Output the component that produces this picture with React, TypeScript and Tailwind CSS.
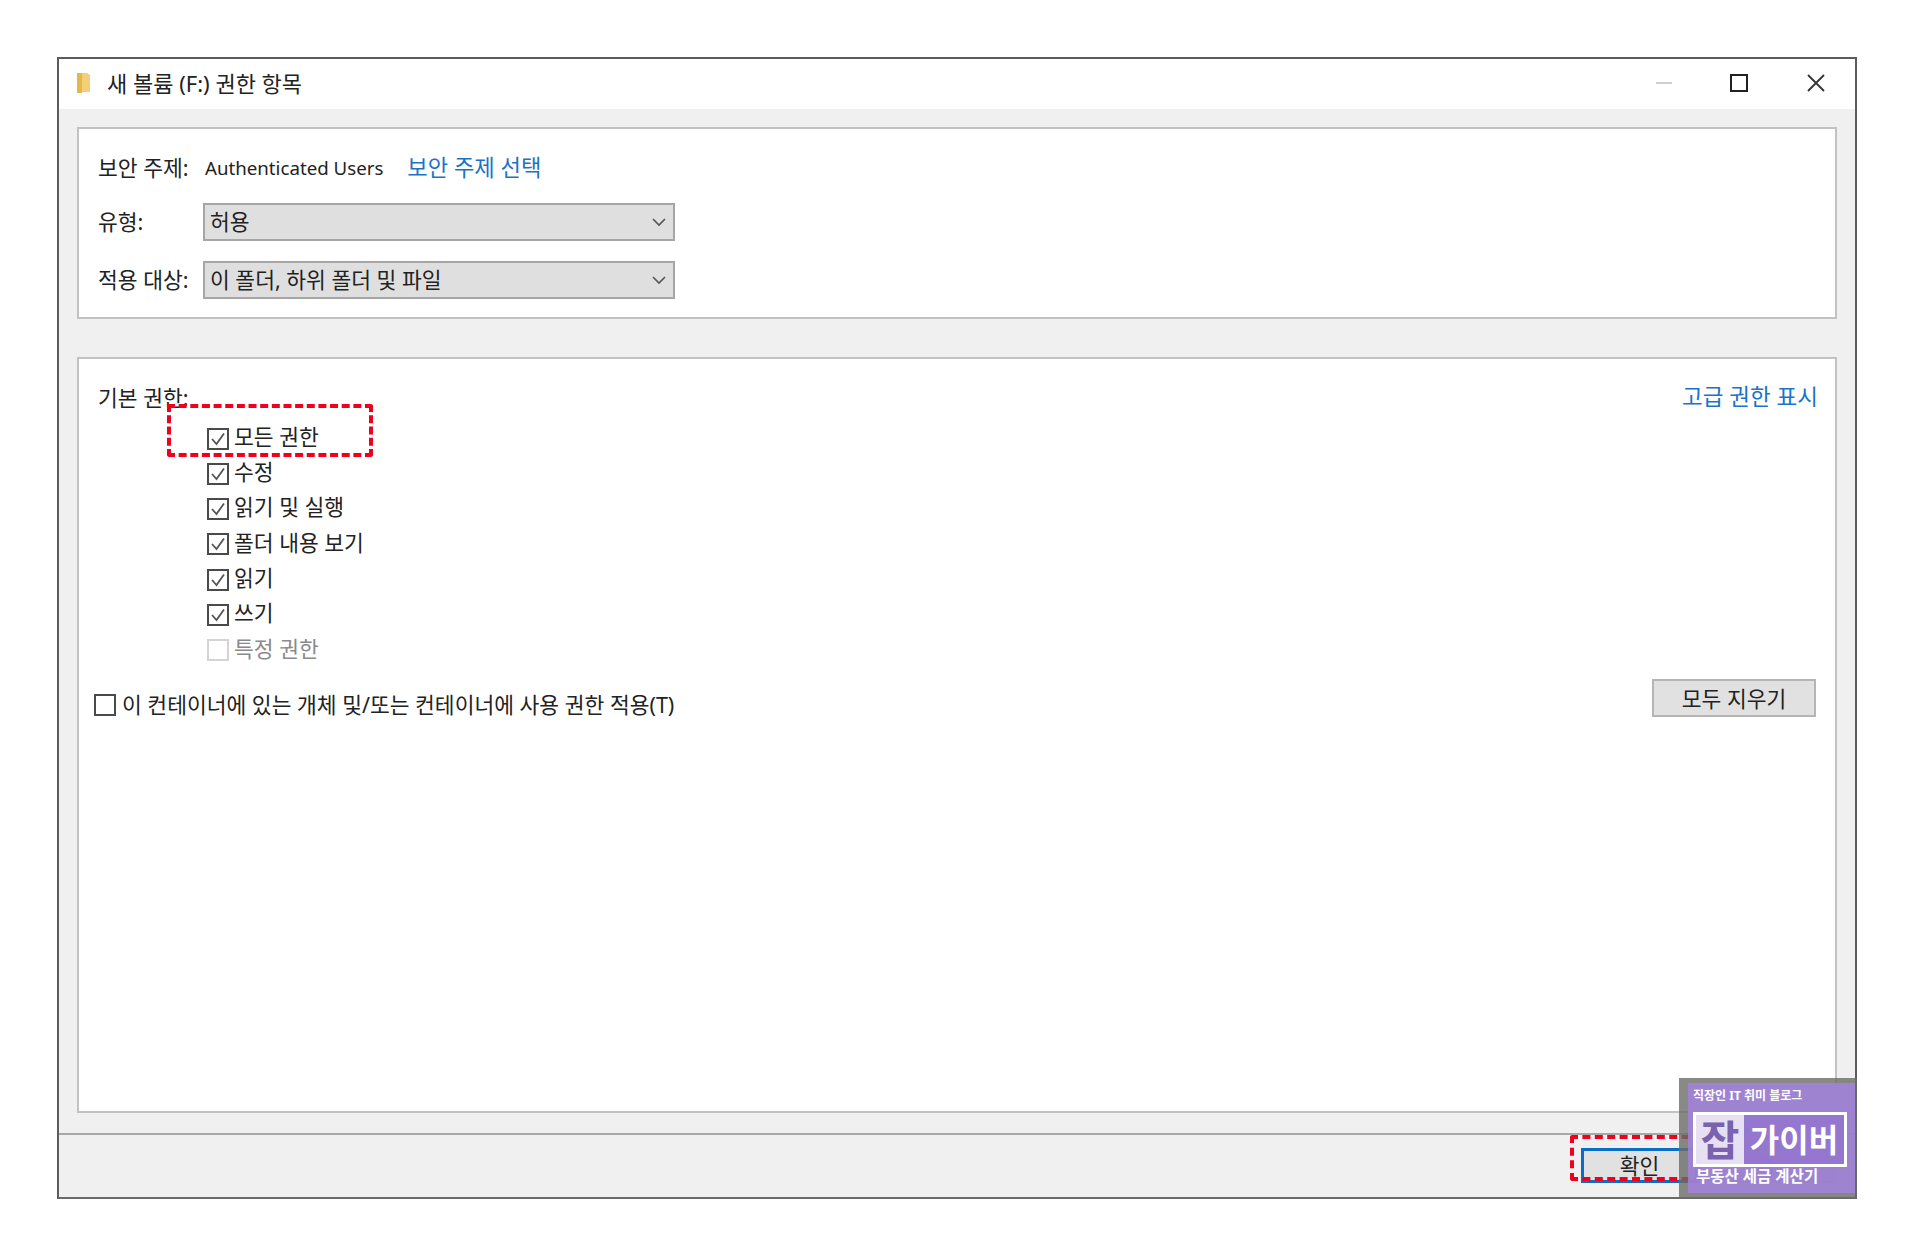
const font = 'font-["Noto_Sans","Noto_Sans_CJK_KR",sans-serif]';

const permissions = [
  { label: '모든 권한', checked: true },
  { label: '수정', checked: true },
  { label: '읽기 및 실행', checked: true },
  { label: '폴더 내용 보기', checked: true },
  { label: '읽기', checked: true },
  { label: '쓰기', checked: true },
  { label: '특정 권한', checked: false, disabled: true },
];

function CheckBox({ checked, disabled }: { checked?: boolean; disabled?: boolean }) {
  return (
    <span className={`flex h-[22px] w-[22px] shrink-0 items-center justify-center border-2 bg-white ${disabled ? 'border-[#d4d4d4]' : 'border-[#4a4a4a]'}`}>
      {checked && (
        <svg width="16" height="16" viewBox="0 0 16 16" fill="none" stroke="#555" strokeWidth="1.8">
          <path d="M2 8l4.5 5L14 2.5" />
        </svg>
      )}
    </span>
  );
}

function Select({ value }: { value: string }) {
  return (
    <div className="flex h-[38px] w-[472px] items-center justify-between border-2 border-[#a6a6a6] bg-[#dfdfdf] pl-[5px] pr-[6px] text-[21.5px] text-[#222]">
      <span>{value}</span>
      <svg width="16" height="16" viewBox="0 0 16 16" fill="none" stroke="#555" strokeWidth="1.6">
        <path d="M2 5l6 6 6-6" />
      </svg>
    </div>
  );
}

export default function App() {
  return (
    <div className={`relative h-[1256px] w-[1914px] bg-white pl-[57px] pt-[57px] ${font}`}>
      <div className="flex h-[1142px] w-[1800px] flex-col border-2 border-[#5c5c5c] border-b-[#6a6a6a] bg-[#f0f0f0] text-[21.5px] leading-none text-[#222]">
        {/* title bar */}
        <div className="flex h-[50px] shrink-0 items-center bg-white pb-[2px] pl-[16px]">
          <svg width="18" height="22" viewBox="0 0 18 22" className="mr-[14px]">
            <path d="M2 1h10l3 2v17H5l-3 1z" fill="#f3d077" />
            <path d="M2 1h5v20H2z" fill="#e6b84a" />
          </svg>
          <span className="text-[22px]">새 볼륨 (F:) 권한 항목</span>
          <div className="ml-auto flex items-center">
            <span className="h-[2px] w-[16px] bg-[#cfcfcf]" />
            <span className="ml-[58px] h-[18px] w-[18px] border-2 border-[#222]" />
            <svg width="18" height="18" viewBox="0 0 18 18" stroke="#333" strokeWidth="1.8" className="ml-[59px] mr-[30px]">
              <path d="M1 1l16 16M17 1L1 17" />
            </svg>
          </div>
        </div>

        <div className="flex flex-1 flex-col px-[18px] pt-[18px]">
          {/* principal panel */}
          <div className="flex h-[192px] flex-col gap-[20px] border-2 border-[#c2c2c2] bg-white pl-[19px] pt-[28px]">
            <div className="mb-[4px] flex h-[22px] items-center">
              <span className="w-[107px]">보안 주제:</span>
              <span className="text-[18.7px]">Authenticated Users</span>
              <span className="ml-[24px] text-[22.2px] text-[#1a73c8]">보안 주제 선택</span>
            </div>
            <div className="flex items-center">
              <span className="w-[105px]">유형:</span>
              <Select value="허용" />
            </div>
            <div className="flex items-center">
              <span className="w-[105px]">적용 대상:</span>
              <Select value="이 폴더, 하위 폴더 및 파일" />
            </div>
          </div>

          {/* permissions panel */}
          <div className="mt-[38px] flex h-[756px] flex-col border-2 border-[#c2c2c2] bg-white pl-[19px] pr-[17px] pt-[28px]">
            <div className="flex items-start justify-between">
              <span>기본 권한:</span>
              <span className="-translate-y-[1px] text-[22.5px] text-[#1a73c8]">고급 권한 표시</span>
            </div>
            <div className="ml-[109px] mt-[18px] flex flex-col gap-[13.3px]">
              {permissions.map((p) => (
                <div key={p.label} className={`flex items-center gap-[5px] ${p.disabled ? 'text-[#8a8a8a]' : ''}`}>
                  <CheckBox checked={p.checked} disabled={p.disabled} />
                  <span className="-translate-y-[2px]">{p.label}</span>
                </div>
              ))}
            </div>
            <div className="mt-[18px] flex items-start justify-between">
              <div className="-ml-[4px] mt-[15px] flex items-center gap-[6px]">
                <CheckBox />
                <span className="-translate-y-[1px]">이 컨테이너에 있는 개체 및/또는 컨테이너에 사용 권한 적용(T)</span>
              </div>
              <button className="mr-[2px] flex h-[38px] w-[164px] items-center justify-center border-2 border-[#b5b5b5] bg-[#e1e1e1]">모두 지우기</button>
            </div>
          </div>
        </div>

        {/* footer */}
        <div className="flex h-[64px] shrink-0 items-start gap-[17px] border-t-2 border-[#a8a8a8] pl-[1522px] pt-[13px]">
          <button className="flex h-[35px] w-[117px] items-center justify-center border-[3px] border-[#0a6fc4] bg-[#e1e1e1]">확인</button>
          <button className="flex h-[35px] w-[120px] items-center justify-center border-2 border-[#adadad] bg-[#e1e1e1]">취소</button>
        </div>
      </div>

      {/* red annotations */}
      <div className="absolute left-[167px] top-[404px] h-[53px] w-[206px] rounded-[3px] border-[4px] border-dashed border-[#f0001c]" />
      <div className="absolute left-[1570px] top-[1135px] h-[46px] w-[132px] rounded-[3px] border-[4px] border-dashed border-[#f0001c]" />

      {/* watermark */}
      <div className="absolute left-[1679px] top-[1078px] h-[120px] w-[178px] bg-[#6b6b66]/80 pb-[5px] pl-[9px] pr-[2px] pt-[5px]">
        <div className="flex h-full flex-col bg-[#a283de]/85 px-[5px] pt-[7px] font-bold leading-none text-white">
          <span className="text-[12px]">직장인 IT 취미 블로그</span>
          <div className="mt-[10px] flex h-[55px] w-[154px] shrink-0 items-stretch border-[3px] border-white">
            <span className="flex w-[48px] items-center justify-center bg-white/75 text-[42px] text-[#7a62ae]">잡</span>
            <span className="flex flex-1 items-center justify-center bg-[#9575cf]/90 text-[32px]">가이버</span>
          </div>
          <span className="ml-[3px] mt-[2px] text-[15.5px]">부동산 세금 계산기</span>
        </div>
      </div>
    </div>
  );
}
